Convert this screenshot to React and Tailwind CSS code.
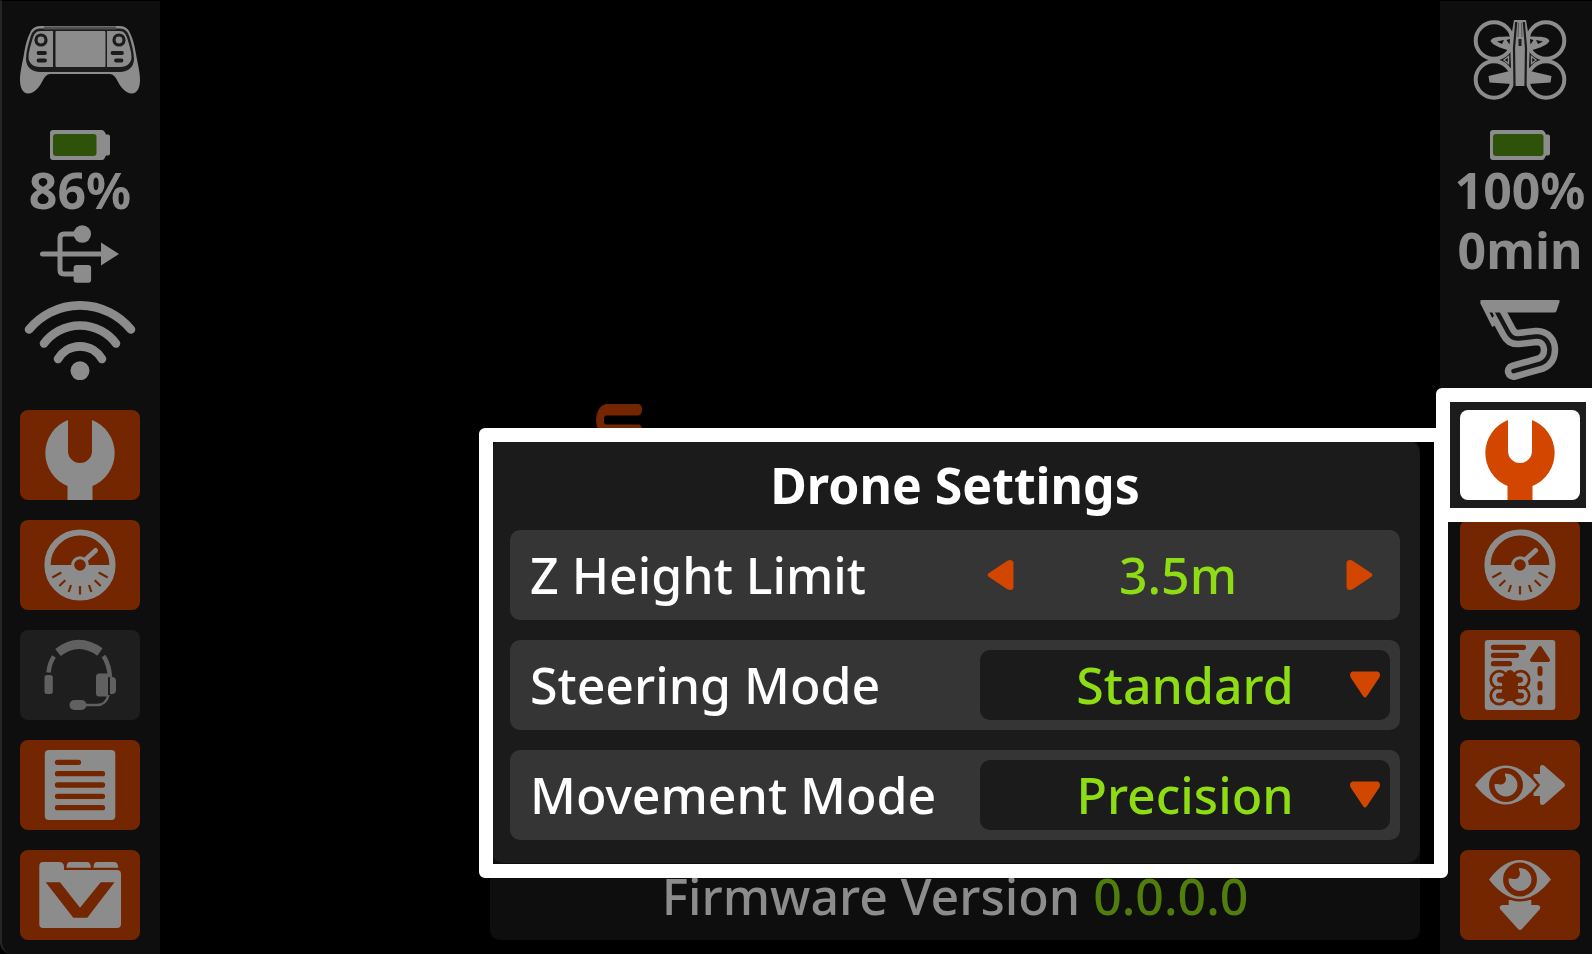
import { useState } from "react";

const HEIGHT_STEP = 0.5;

function ControllerIcon() {
  return (
    <svg viewBox="0 0 120 80" className="h-20 w-[120px]" fill="none">
      <path
        d="M20 6H100C105 6 108.500 9 110 13C113 19 114.500 25 116 34C118 45 120 52 120 60C120 68 117 73.500 112 73.500C105 73.500 100 66 97 60C95 56.500 93 54 90 54H30C27 54 25 56.500 23 60C20 66 15 73.500 8 73.500C3 73.500 0 68 0 60C0 52 2 45 4 34C5.500 25 7 19 10 13C11.500 9 15 6 20 6Z"
        fill="#8c8c8c"
      />
      <path
        d="M20 8.500H100C105 8.500 108 12 109.500 17C112 25 114 33 114 39C114 47 108 52 100 52H20C12 52 6 47 6 39C6 33 8 25 10.500 17C12 12 15 8.500 20 8.500Z"
        fill="#1c1c1c"
      />
      <path
        d="M33 11H20.500C16 11 14 14 12.500 19C10.500 26 8.500 32 8.500 37C8.500 43 13 47 20 47H33Z"
        fill="#8c8c8c"
      />
      <path
        d="M87 11H99.500C104 11 106 14 107.500 19C109.500 26 111.500 32 111.500 37C111.500 43 107 47 100 47H87Z"
        fill="#8c8c8c"
      />
      <path d="M24 8H96" stroke="#505050" strokeWidth="3" />
      <rect x="35.500" y="11" width="50" height="36" rx="1" fill="#8c8c8c" />
      <circle cx="21" cy="20" r="5" stroke="#1c1c1c" strokeWidth="3.200" />
      <circle cx="99" cy="20" r="5" stroke="#1c1c1c" strokeWidth="3.200" />
      <path
        d="M18.500 33H25M18.500 40.500H25M92.500 33H102M96 40.500H101.500"
        stroke="#1c1c1c"
        strokeWidth="3.800"
        strokeLinecap="round"
      />
    </svg>
  );
}

function DroneIcon() {
  return (
    <svg viewBox="0 0 120 80" className="h-20 w-[120px]" fill="none">
      <g stroke="#8c8c8c" strokeWidth="4">
        <circle cx="34" cy="20.500" r="18.300" />
        <circle cx="86" cy="20.500" r="18.300" />
        <circle cx="34" cy="59.500" r="18.300" />
        <circle cx="86" cy="59.500" r="18.300" />
      </g>
      <path
        d="M30.500 21C32 17 38 16.500 51 16.500V31C44 29 33 26 30.500 21ZM89.500 21C88 17 82 16.500 69 16.500V31C76 29 87 26 89.500 21Z"
        fill="#8c8c8c"
      />
      <path
        d="M37 21.500L44 20L42 24ZM83 21.500L76 20L78 24ZM46.500 20L50 19L49.500 24.500ZM73.500 20L70 19L70.500 24.500Z"
        fill="#0e0e0e"
      />
      <path
        d="M28.500 56L52 50.500V64L29.500 62.500ZM91.500 56L68 50.500V64L90.500 62.500Z"
        fill="#8c8c8c"
      />
      <path
        d="M54 0H66L70 24L69 50L66.300 66H53.700L51 50L50 24Z"
        fill="#8c8c8c"
      />
      <path d="M56.200 2L54 28L54.500 66M63.800 2L66 28L65.500 66" stroke="#1a1a1a" strokeWidth="2.200" />
      <path d="M60 19V26" stroke="#1c1c1c" strokeWidth="3" />
      <path d="M58.500 3L58 17M61.500 3L62 17" stroke="#4a4a4a" strokeWidth="0.800" />
      <path d="M44 40L48.500 36.500V43.500ZM76 40L71.500 36.500V43.500Z" fill="#0e0e0e" stroke="#8c8c8c" strokeWidth="1.500" />
    </svg>
  );
}

function BatteryIcon({ full }) {
  return (
    <svg viewBox="0 0 60 30" className="h-[30px] w-[60px]">
      <path
        d="M3 0H52Q54 0 55 2.500L56 4.500H58Q60 4.500 60 6.500V23.500Q60 25.500 58 25.500H56L55 27.500Q54 30 52 30H3Q0 30 0 27V3Q0 0 3 0Z"
        fill="#8c8c8c"
      />
      <rect x="3" y="4" width={full ? 50.5 : 43.5} height="22" rx="3" fill="#2f520a" />
    </svg>
  );
}

function UsbIcon() {
  return (
    <svg viewBox="0 0 120 80" className="h-20 w-[120px]" fill="none">
      <path
        d="M22.500 34H84M62 14H44Q40 14 40 18V50Q40 54 44 54H60"
        stroke="#8c8c8c"
        strokeWidth="5"
        strokeLinecap="round"
      />
      <circle cx="62.300" cy="14" r="8.700" fill="#8c8c8c" />
      <rect x="53.600" y="45" width="17.500" height="17.800" rx="3" fill="#8c8c8c" />
      <path d="M81 22.500L99 34L81 45.500Z" fill="#8c8c8c" />
    </svg>
  );
}

function WifiIcon() {
  return (
    <svg viewBox="0 0 120 80" className="h-20 w-[120px]" fill="none">
      <path
        d="M9 29.500A66 66 0 0 1 111 29.500M24 43.500A45 45 0 0 1 96 43.500M38 59A25.500 25.500 0 0 1 82 59"
        stroke="#8c8c8c"
        strokeWidth="8.600"
        strokeLinecap="round"
      />
      <circle cx="60" cy="70.700" r="9.500" fill="#8c8c8c" />
    </svg>
  );
}

function TrackIcon() {
  const road =
    "M35 8L48 32Q51.500 39 58.500 38.500L76 36.500C85 36 89.500 43 89.500 49.500C89.500 56.500 86.500 61 81 63.500L53.500 71.200";
  return (
    <svg viewBox="0 0 120 80" className="h-20 w-[120px]" fill="none">
      <path d={road} stroke="#8c8c8c" strokeWidth="17.500" strokeLinecap="round" />
      <path d={road} stroke="#151515" strokeWidth="4.500" strokeLinecap="round" />
      <path d="M0 -10H22L34 16L30 20Z" fill="#0e0e0e" />
      <path d="M22 2L34 26" stroke="#8c8c8c" strokeWidth="4" />
      <path d="M22 0H98Q100.300 0 99.500 2L96.500 11Q96 12.500 94 12.500H27L20.500 2.500Q19.500 0 22 0Z" fill="#8c8c8c" />
    </svg>
  );
}

function WrenchIcon() {
  return (
    <svg viewBox="0 0 120 90" className="h-full w-full" fill="currentColor">
      <path d="M48 10V41A12 12 0 0 0 72 41V10A35.500 35.500 0 0 1 72.500 76V90H47.500V76A35.500 35.500 0 0 1 48 10Z" />
    </svg>
  );
}

function GaugeIcon() {
  return (
    <svg viewBox="0 0 120 90" className="h-full w-full" fill="none" stroke="currentColor">
      <circle cx="60" cy="45" r="32.500" strokeWidth="6.200" />
      <path d="M28 45A32 32 0 0 0 92 45Z" fill="currentColor" stroke="none" />
      <path d="M63 42L75.500 30.500" strokeWidth="5" strokeLinecap="round" />
      <circle cx="60" cy="45" r="7.300" fill="#732600" strokeWidth="3" />
      <path
        d="M32.300 57.500L41.300 52.500M39.300 66L45.300 60.300M48.700 72L51 65M60 74.500V66M71.300 72L69 65M80.700 66L74.700 60.300M87.700 57.500L78.700 52.500"
        stroke="#732600"
        strokeWidth="2.200"
      />
    </svg>
  );
}

function HeadsetIcon() {
  return (
    <svg viewBox="0 0 120 90" className="h-full w-full" fill="none" stroke="currentColor">
      <path d="M38 22.500Q58.500 6.500 80 22" strokeWidth="9" />
      <path d="M34 26.500Q29.500 33 28.500 42.500M83.500 26Q89 34 90 47" strokeWidth="4.500" />
      <rect x="24.500" y="45" width="8.300" height="19" rx="2.500" fill="currentColor" stroke="none" />
      <path d="M79 43.500H88V66.500H79Q76 66.500 76 63V47Q76 43.500 79 43.500Z" fill="currentColor" stroke="none" />
      <path d="M90 47H92Q96 47 96 51V60Q96 64 92 64H90Z" fill="currentColor" stroke="none" />
      <path d="M88.500 65Q86 75 77 75H65" strokeWidth="2.500" />
      <rect x="49.500" y="70" width="17" height="10" rx="5" fill="currentColor" stroke="none" />
    </svg>
  );
}

function LogIcon() {
  return (
    <svg viewBox="0 0 120 90" className="h-full w-full">
      <rect x="24.800" y="10" width="70.500" height="70" rx="4" fill="currentColor" />
      <path
        d="M37.500 22.300H58.500M37.500 33.700H82.500M37.500 45H82.500M37.500 56.300H82.500M37.500 67.700H82.500"
        stroke="#732600"
        strokeWidth="5.300"
        strokeLinecap="round"
      />
    </svg>
  );
}

function FolderIcon() {
  return (
    <svg viewBox="0 0 120 90" className="h-full w-full" fill="currentColor">
      <path d="M23 12H39Q44 12 44 17V20H97Q101 20 101 24V74Q101 78 97 78H23Q19.300 78 19.300 74V16Q19.300 12 23 12Z" />
      <path d="M46.500 17.700Q46.500 12 50 12H67Q70.500 12 71 17.700ZM73.500 17.700Q73.500 12 77 12H94Q98 12 98.300 17.700Z" />
      <path d="M25.700 32.300H40L60 57.700L80.700 32.300H94.500L67.300 67.700H53.300Z" fill="#732600" />
    </svg>
  );
}

function PlanIcon() {
  return (
    <svg viewBox="0 0 120 90" className="h-full w-full" fill="none">
      <rect x="24.800" y="10" width="70.500" height="70" rx="3" fill="currentColor" />
      <g stroke="#732600" strokeLinecap="round">
        <path d="M33.500 17.300H63.500M33.500 25.300H56.500M33.500 33.700H49.500" strokeWidth="5.300" />
        <path d="M80 38.500V43.500M80 53.500V58M80 67.500V72" strokeWidth="5" />
        <circle cx="39.300" cy="49.700" r="8.500" strokeWidth="2.800" />
        <circle cx="60.700" cy="49.700" r="8.500" strokeWidth="2.800" />
        <circle cx="39.300" cy="65.700" r="8.500" strokeWidth="2.800" />
        <circle cx="60.700" cy="65.700" r="8.500" strokeWidth="2.800" />
        <path d="M40 49.700H60M39 65.700H61" strokeWidth="6" />
      </g>
      <path
        d="M50 40Q53 40 54 43L59 48L57.500 57L59 67L54 71H46L41 67L42.500 57L41 48L46 43Q47 40 50 40Z"
        fill="#732600"
      />
      <path
        d="M80 18L88 30H72Z"
        fill="#732600"
        stroke="#732600"
        strokeWidth="4"
        strokeLinejoin="round"
      />
    </svg>
  );
}

// The eye is centred on 0,0 so both view buttons can place it.
function Eye() {
  return (
    <>
      <path
        d="M-31 0Q-16 -19.500 0 -19.500T31 0Q16 19.500 0 19.500T-31 0Z"
        fill="currentColor"
        stroke="#732600"
        strokeWidth="5"
        paintOrder="stroke"
      />
      <circle r="14.200" stroke="#732600" strokeWidth="5.500" />
      <circle cx="-5.500" cy="-6" r="5.500" fill="#732600" />
      <path d="M-9 -13H-1V-6H-5V-1H-13V-8Z" fill="#732600" />
    </>
  );
}

function EyeRightIcon() {
  return (
    <svg viewBox="0 0 120 90" className="h-full w-full" fill="none">
      <path
        d="M73.500 34H80V28Q80 24 84 25.500L104 43Q106 45 104 47L84 64.500Q80 66 80 62V56H73.500Z"
        fill="currentColor"
      />
      <g transform="translate(46 45)">
        <Eye />
      </g>
    </svg>
  );
}

function EyeDownIcon() {
  return (
    <svg viewBox="0 0 120 90" className="h-full w-full" fill="none">
      <path
        d="M48.700 50V55H43Q39 55 40 59L58 79Q60 81 62 79L80 59Q81 55 77 55H71.300V50Z"
        fill="currentColor"
      />
      <g transform="translate(60 29.500)">
        <Eye />
      </g>
    </svg>
  );
}

function SideButton({ label, children, tone = "orange", ...props }) {
  const tones = {
    orange: "bg-[#732600] text-[#8c8c8c]",
    muted: "bg-[#1e1e1e] text-[#606060]",
    active: "bg-white text-[#d24600]",
  };

  return (
    <button
      aria-label={label}
      className={`block h-[90px] w-[120px] overflow-hidden rounded-lg ${tones[tone]}`}
      {...props}
    >
      {children}
    </button>
  );
}

function Readout({ children }) {
  return (
    <span className="flex h-[60px] items-center justify-center whitespace-nowrap font-bold text-[#8c8c8c]">
      {children}
    </span>
  );
}

function ControllerSidebar() {
  return (
    <aside className="w-40 shrink-0 rounded-bl-xl border-t border-l-2 border-t-black border-l-[#262626] bg-[#0e0e0e] pt-[19px] pl-[18px]">
      <div className="flex w-[120px] flex-col items-center">
        <ControllerIcon />
        <div className="mt-[30px]">
          <BatteryIcon />
        </div>
        <Readout>86%</Readout>
        <UsbIcon />
        <WifiIcon />
      </div>
      <nav className="mt-[30px] flex flex-col gap-5">
        <SideButton label="Controller settings">
          <WrenchIcon />
        </SideButton>
        <SideButton label="Controller status">
          <GaugeIcon />
        </SideButton>
        <SideButton label="Headset" tone="muted">
          <HeadsetIcon />
        </SideButton>
        <SideButton label="Log">
          <LogIcon />
        </SideButton>
        <SideButton label="Files">
          <FolderIcon />
        </SideButton>
      </nav>
    </aside>
  );
}

function DroneSidebar() {
  return (
    <aside className="w-[152px] shrink-0 border-t border-black bg-[#0e0e0e] pt-[19px] pl-5">
      <div className="flex w-[120px] flex-col items-center">
        <DroneIcon />
        <div className="mt-[30px]">
          <BatteryIcon full />
        </div>
        <Readout>100%</Readout>
        <Readout>0min</Readout>
        <div className="mt-5">
          <TrackIcon />
        </div>
      </div>
      <nav className="mt-[30px] flex w-[120px] flex-col gap-5">
        <div className="relative z-10">
          <div className="absolute -inset-y-[22px] -right-5 -left-6 rounded-md border-14 border-white bg-[#1c1c1c]" />
          <div className="relative">
            <SideButton label="Drone settings" tone="active">
              <WrenchIcon />
            </SideButton>
          </div>
        </div>
        <SideButton label="Drone status">
          <GaugeIcon />
        </SideButton>
        <SideButton label="Flight plan">
          <PlanIcon />
        </SideButton>
        <SideButton label="Look forward">
          <EyeRightIcon />
        </SideButton>
        <SideButton label="Look down">
          <EyeDownIcon />
        </SideButton>
      </nav>
    </aside>
  );
}

function Triangle({ className }) {
  return (
    <svg viewBox="0 0 30 30" className={className}>
      <path
        d="M2.500 1.500H27.500Q30 2 30 4.500T29 8L17 26Q15 29 13 26L1 8Q0 6.500 0 4.500T2.500 1.500Z"
        fill="#d24600"
      />
    </svg>
  );
}

function SettingRow({ id, label, children }) {
  return (
    <div className="flex h-[90px] items-center justify-between rounded-[10px] bg-[#353535] pr-[10px] pl-5">
      <label htmlFor={id} className="whitespace-nowrap text-white">
        {label}
      </label>
      {children}
    </div>
  );
}

function SelectRow({ id, label, options }) {
  return (
    <SettingRow id={id} label={label}>
      <div className="relative w-[410px]">
        <select
          id={id}
          className="block h-[70px] w-full appearance-none rounded-[10px] bg-[#1b1b1b] text-center font-medium text-[#8edc14] [text-align-last:center]"
        >
          {options.map((option) => (
            <option key={option}>{option}</option>
          ))}
        </select>
        <Triangle className="pointer-events-none absolute top-5 right-[10px] size-[30px]" />
      </div>
    </SettingRow>
  );
}

function DroneSettings() {
  const [height, setHeight] = useState(3.5);

  return (
    <section className="relative rounded-[10px] bg-[#0e0e0e] font-medium">
      <div className="rounded-[14px] bg-[#1b1b1b] px-5 pb-[23px]">
        <h1 className="text-center leading-[90px] font-bold text-white">
          Drone Settings
        </h1>
        <div className="flex flex-col gap-5">
          <SettingRow id="height" label="Z Height Limit">
            <div className="mr-[10px] flex w-[400px] items-center">
              <button
                aria-label="Lower limit"
                className="flex h-[70px] w-10 items-center justify-center"
                onClick={() => setHeight(Math.max(0, height - HEIGHT_STEP))}
              >
                <Triangle className="size-[30px] rotate-90" />
              </button>
              <output
                id="height"
                className="flex-1 pr-1 text-center text-[#8edc14]"
              >
                {height.toFixed(1)}m
              </output>
              <button
                aria-label="Raise limit"
                className="flex h-[70px] w-10 items-center justify-center"
                onClick={() => setHeight(height + HEIGHT_STEP)}
              >
                <Triangle className="size-[30px] -rotate-90" />
              </button>
            </div>
          </SettingRow>
          <SelectRow
            id="steering"
            label="Steering Mode"
            options={["Standard", "Advanced"]}
          />
          <SelectRow
            id="movement"
            label="Movement Mode"
            options={["Precision", "Sport"]}
          />
        </div>
      </div>
      <p className="pb-[11px] text-center leading-[66px] text-[#8c8c8c]">
        Firmware Version <span className="text-[#507d0c]">0.0.0.0</span>
      </p>
      <div className="pointer-events-none absolute -top-3 -right-7 bottom-[62px] -left-[11px] rounded-md border-14 border-white" />
    </section>
  );
}

export default function App() {
  return (
    <div className="flex min-h-screen w-full overflow-hidden bg-black font-['Noto_Sans',sans-serif] text-[50px] leading-[60px]">
      <ControllerSidebar />
      <main className="flex flex-1 flex-col pr-5 pb-[14px] pl-[330px]">
        <div className="flex flex-1 items-end">
          <svg viewBox="0 0 46 36" className="ml-[106px] h-9 w-[46px]">
            <path
              d="M10 0H43Q46 1 46 5.500T43 11.500H11Q8 11.500 8 15V18Q8 20.500 11 20.500H43Q46 21 46 26T43 32H10Q1 30 0 16Q1 2 10 0Z"
              fill="#732600"
            />
          </svg>
        </div>
        <DroneSettings />
      </main>
      <DroneSidebar />
    </div>
  );
}
